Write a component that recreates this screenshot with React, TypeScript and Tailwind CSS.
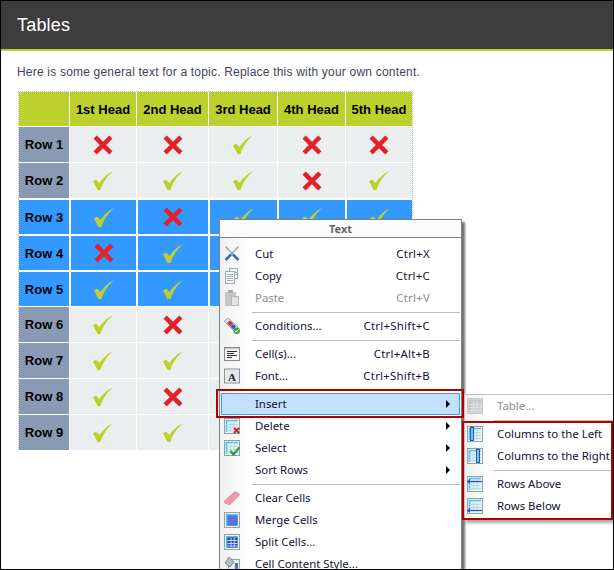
import type { ReactNode } from "react";

const heads = ["1st Head", "2nd Head", "3rd Head", "4th Head", "5th Head"];

// 1 = tick, 0 = cross
const rows = [
  { name: "Row 1", cells: [0, 0, 1, 0, 0] },
  { name: "Row 2", cells: [1, 1, 1, 0, 1] },
  { name: "Row 3", cells: [1, 0, 1, 1, 1], picked: true },
  { name: "Row 4", cells: [0, 1, 1, 1, 1], picked: true },
  { name: "Row 5", cells: [1, 1, 1, 1, 1], picked: true },
  { name: "Row 6", cells: [1, 0, 1, 1, 1] },
  { name: "Row 7", cells: [1, 1, 1, 1, 1] },
  { name: "Row 8", cells: [1, 0, 1, 1, 1] },
  { name: "Row 9", cells: [1, 1, 1, 1, 1] },
];

function Tick() {
  return (
    <svg width="20" height="19" viewBox="0 0 20 19">
      <path d="M0 10.5 L3 8.5 L6.5 12 C9 8 14 3 20 0 C14.5 5 10 11 7.5 19 L4.5 19 Z" fill="#bdd12e" />
    </svg>
  );
}

function Cross() {
  return (
    <svg width="20" height="20" viewBox="0 0 20 20">
      <path d="M3 3 L17 17 M17 3 L3 17" stroke="#e32129" strokeWidth="5" strokeLinecap="square" transform="translate(10 10) scale(0.9) translate(-10 -10)" />
    </svg>
  );
}

function Frame({ children }: { children: ReactNode }) {
  return (
    <svg width="16" height="16" viewBox="0 0 16 16">
      {children}
    </svg>
  );
}

function GridIcon({ gray }: { gray?: boolean }) {
  return (
    <>
      <rect x="0.5" y="0.5" width="15" height="15" fill={gray ? "#d8d8d8" : "#eef5f5"} stroke={gray ? "#c8c8c8" : "#8fa5a5"} />
      <rect x="2" y="2" width="12" height="12" fill={gray ? "#cfcfcf" : "#e6eef0"} />
      <path d="M2 2.5H14M2.5 2V14" stroke={gray ? "#c2c2c2" : "#45c0f5"} strokeWidth="1.6" />
      <path d="M2 6.5H14M2 9.5H14M2 12.5H14M6.5 2V14M10 2V14" stroke={gray ? "#e2e2e2" : "#a9d8ee"} strokeWidth="0.8" />
    </>
  );
}

const icons: Record<string, ReactNode> = {
  Cut: (
    <Frame>
      <path d="M1.5 0.5 L9.5 9 M14.5 0.5 L6.5 9" stroke="#9aa5ad" strokeWidth="1.4" />
      <path d="M9 8.5 L14.5 14 M7 8.5 L1.5 14" stroke="#2f6fc0" strokeWidth="2.6" />
    </Frame>
  ),
  Copy: (
    <Frame>
      <rect x="5.5" y="0.5" width="8" height="10" fill="#eef3f3" stroke="#9fb0b0" />
      <rect x="1.5" y="3.5" width="9" height="12" fill="#f6f9f9" stroke="#9fb0b0" />
      <path d="M3 6.5H9M3 8.5H9M3 10.5H9M3 12.5H9M11 4.5H13M11 6.5H13" stroke="#9fb0b0" />
    </Frame>
  ),
  Paste: (
    <Frame>
      <rect x="1" y="2" width="11" height="14" fill="#c6c6c6" />
      <rect x="4" y="0" width="5" height="3" fill="#a9a9a9" />
      <rect x="7.5" y="6.5" width="7" height="9" fill="#e4e4e4" stroke="#b8b8b8" />
    </Frame>
  ),
  "Conditions...": (
    <Frame>
      <path d="M0 3 L4 0 L14 9 L10 13 Z" fill="#e0e0e8" stroke="#8a8a9a" strokeWidth="0.7" />
      <path d="M3 5 L6 2.5 L9.2 5.6 L6.2 8.4 Z" fill="#d8323c" />
      <path d="M6.4 8.6 L9.4 6 L12 8.6 L9.4 11.6 Z" fill="#2d5fc4" />
      <circle cx="12.7" cy="12.7" r="3.3" fill="#3aa53a" />
      <path d="M11 12.6 L12.3 14 L14.5 11.3" stroke="#ffffff" strokeWidth="1" fill="none" />
    </Frame>
  ),
  "Cell(s)...": (
    <Frame>
      <rect x="0.5" y="1.5" width="15" height="13" fill="#f4f4f4" stroke="#8a8a8a" />
      <path d="M1 2.5H15" stroke="#c4c4c4" />
      <path d="M3 5.5H13M3 7.5H10M3 9.5H13M3 11.5H8" stroke="#303030" />
    </Frame>
  ),
  "Font...": (
    <Frame>
      <rect x="0.5" y="1" width="15" height="14" fill="#e4e8e8" stroke="#8b9898" />
      <text x="8" y="12.5" textAnchor="middle" fontSize="11" fontWeight="700" fontFamily="'Liberation Serif', serif" fill="#222222">
        A
      </text>
    </Frame>
  ),
  Delete: (
    <Frame>
      <GridIcon />
      <path d="M10 10 L15 15 M15 10 L10 15" stroke="#d32020" strokeWidth="1.8" />
    </Frame>
  ),
  Select: (
    <Frame>
      <GridIcon />
      <path d="M6.5 11 L9.5 14.5 L15.5 7.5" stroke="#2f9e35" strokeWidth="2.2" fill="none" />
    </Frame>
  ),
  "Clear Cells": (
    <Frame>
      <path d="M0 11.5 L10.5 2 C12 1.5 15 3.5 15.5 5 L6 14.5 C4 15 1 13.5 0 11.5 Z" fill="#ee98a8" stroke="#c97c90" strokeWidth="0.7" />
    </Frame>
  ),
  "Merge Cells": (
    <Frame>
      <rect x="0.5" y="0.5" width="15" height="15" fill="#eef5f5" stroke="#8fa5a5" />
      <rect x="2" y="2" width="12" height="12" fill="#45c0f5" />
      <rect x="3.5" y="3.5" width="10" height="10" fill="#6070d0" />
    </Frame>
  ),
  "Split Cells...": (
    <Frame>
      <rect x="0.5" y="0.5" width="15" height="15" fill="#eef5f5" stroke="#8fa5a5" />
      <rect x="2" y="2" width="12" height="12" fill="#45c0f5" />
      <rect x="3.5" y="3.5" width="10" height="10" fill="#2f49c4" />
      <path d="M3.5 6.5H13.5M3.5 9.5H13.5M3.5 12H13.5M7 3.5V13.5M10.3 3.5V13.5" stroke="#ffffff" strokeWidth="0.7" />
    </Frame>
  ),
  "Cell Content Style...": (
    <Frame>
      <rect x="4.5" y="3.5" width="11" height="13" fill="#e8f2f6" stroke="#8fa5a5" />
      <path d="M11 7H14V16H11Z" fill="#3f74c8" />
      <path d="M1 7 L5 1 L10 6 L6 11 Z" fill="#b8bec8" stroke="#59657a" strokeWidth="0.7" />
    </Frame>
  ),
  "Table...": (
    <Frame>
      <GridIcon gray />
    </Frame>
  ),
  "Columns to the Left": (
    <Frame>
      <GridIcon />
      <rect x="3.5" y="1.5" width="3" height="13" fill="#5ccbf8" stroke="#3651c4" />
      <path d="M5 0 L7 2 H3 Z" fill="#3651c4" />
    </Frame>
  ),
  "Columns to the Right": (
    <Frame>
      <GridIcon />
      <rect x="9.5" y="1.5" width="3" height="13" fill="#5ccbf8" stroke="#3651c4" />
      <path d="M11 0 L13 2 H9 Z" fill="#3651c4" />
    </Frame>
  ),
  "Rows Above": (
    <Frame>
      <GridIcon />
      <path d="M0 5.5H15" stroke="#3651c4" strokeWidth="1.2" />
      <path d="M0 5.5 L3 3 V8 Z" fill="#3651c4" />
    </Frame>
  ),
  "Rows Below": (
    <Frame>
      <GridIcon />
      <path d="M0 12.5H15" stroke="#3651c4" strokeWidth="1.2" />
      <path d="M0 12.5 L3 10 V15 Z" fill="#3651c4" />
    </Frame>
  ),
};

type Item = { label?: string; keys?: string; sub?: boolean; off?: boolean; active?: boolean };

const mainMenu: Item[] = [
  { label: "Cut", keys: "Ctrl+X" },
  { label: "Copy", keys: "Ctrl+C" },
  { label: "Paste", keys: "Ctrl+V", off: true },
  {},
  { label: "Conditions...", keys: "Ctrl+Shift+C" },
  {},
  { label: "Cell(s)...", keys: "Ctrl+Alt+B" },
  { label: "Font...", keys: "Ctrl+Shift+B" },
  {},
  { label: "Insert", sub: true, active: true },
  { label: "Delete", sub: true },
  { label: "Select", sub: true },
  { label: "Sort Rows", sub: true },
  {},
  { label: "Clear Cells" },
  { label: "Merge Cells" },
  { label: "Split Cells..." },
  { label: "Cell Content Style..." },
];

const subMenu: Item[] = [
  { label: "Table...", off: true },
  {},
  { label: "Columns to the Left" },
  { label: "Columns to the Right" },
  {},
  { label: "Rows Above" },
  { label: "Rows Below" },
];

function MenuRow({ item, nested }: { item: Item; nested?: boolean }) {
  if (!item.label) {
    return (
      <div className={"mr-px flex h-[6px] items-center " + (nested ? "ml-[29px]" : "ml-[32px]")}>
        <div className="h-px w-full bg-[#bdbdbd]" />
      </div>
    );
  }
  const tone = item.off ? "text-[#8c8c8c]" : "text-[#10103a]";
  return (
    <div
      className={
        "relative flex h-[22px] items-center whitespace-nowrap " +
        (item.active ? "mx-px border border-[#4a9bea] bg-[#c3e0fb] " : "")
      }
    >
      <div className={"flex shrink-0 items-center " + (nested ? "w-[32px] pl-[2px]" : item.active ? "w-[33px] pl-[2px]" : "w-[35px] pl-[4px]")}>
        {icons[item.label]}
      </div>
      <span className={tone}>{item.label}</span>
      {item.keys && <span className={"absolute right-[31px] tracking-[0.25px] " + tone}>{item.keys}</span>}
      {item.sub && (
        <span
          className={
            "absolute h-0 w-0 border-y-[4px] border-l-[4px] border-y-transparent border-l-black " +
            (item.active ? "right-[9px]" : "right-[11px]")
          }
        />
      )}
    </div>
  );
}

export default function App() {
  return (
    <div className="relative h-[570px] w-[614px] overflow-hidden border border-black bg-white font-['Liberation_Sans',Arial,sans-serif]">
      <div className="flex h-[48px] items-center bg-[#3d3d3d] pl-[16px] text-[18px] tracking-[0.2px] text-white">Tables</div>
      <div className="h-[2px] bg-[#bdd12e]" />
      <p className="mt-[13px] pl-[16px] text-[12px] leading-[16px] tracking-[0.2px] text-[#444455]">
        Here is some general text for a topic. Replace this with your own content.
      </p>
      <div className="ml-[17px] mt-[11px] w-[395px] border-x border-t border-dotted border-[#bbbbbb]">
        <div className="grid grid-cols-[50px_66px_71px_68px_67px_66px] gap-px text-[13px] font-bold text-black">
          <div className="h-[34px] bg-[#bdd12e]" />
          {heads.map((h) => (
            <div key={h} className="flex h-[34px] items-center justify-center bg-[#bdd12e] pt-px">
              {h}
            </div>
          ))}
          {rows.map((r) => (
            <div key={r.name} className="contents">
              <div
                className={
                  "flex h-[35px] items-center justify-center pt-px " +
                  (r.picked ? "border-t border-white bg-[#3399ff]" : "bg-[#8a9ab4]")
                }
              >
                {r.name}
              </div>
              {r.cells.map((c, i) => (
                <div
                  key={i}
                  className={
                    "flex h-[35px] items-center justify-center " +
                    (r.picked ? "border-l border-t border-white bg-[#3399ff]" : "bg-[#ebeeef]")
                  }
                >
                  {c ? <Tick /> : <Cross />}
                </div>
              ))}
            </div>
          ))}
        </div>
      </div>

      {/* context menu */}
      <div className="absolute left-[218px] top-[218px] w-[243px] border border-[#808080] bg-white font-['Noto_Sans',sans-serif] text-[11.4px] shadow-[3px_3px_2px_rgba(0,0,0,0.55)]">
        <div className="flex h-[18px] items-center justify-center border-b border-[#808080] bg-[#fbfbfb] pt-[2px] text-[11px] font-bold text-[#666666]">
          Text
        </div>
        <div className="bg-gradient-to-r from-[#f0f0f0] to-white bg-[length:30px_100%] bg-no-repeat pt-[5px]">
          {mainMenu.map((item, i) => (
            <MenuRow key={i} item={item} />
          ))}
        </div>
      </div>

      {/* sub menu */}
      <div className="absolute left-[463px] top-[393px] w-[160px] border-y border-l border-[#c0c0c0] bg-white pb-[2px] font-['Noto_Sans',sans-serif] text-[11.4px] shadow-[2px_3px_3px_rgba(0,0,0,0.35)]">
        <div className="bg-gradient-to-r from-[#f0f0f0] to-white bg-[length:24px_100%] bg-no-repeat">
          {subMenu.map((item, i) => (
            <MenuRow key={i} item={item} nested />
          ))}
        </div>
      </div>

      {/* red callouts */}
      <div className="absolute left-[215px] top-[388px] h-[29px] w-[248px] border-2 border-[#b00000]" />
      <div className="absolute left-[461px] top-[420px] h-[99px] w-[151px] border-2 border-[#b00000]" />
    </div>
  );
}
